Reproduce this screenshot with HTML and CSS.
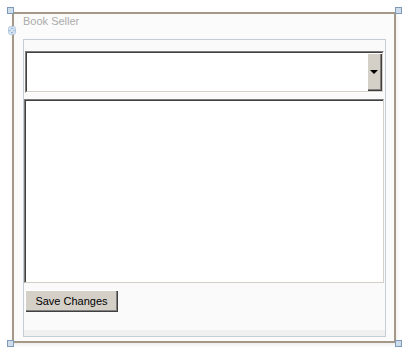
FILE: index.html
```html
<!DOCTYPE html>
<html>
<head>
<meta charset="utf-8">
<link rel="stylesheet" href="styles.css">
</head>
<body>
<div class="canvas">
  <div class="frame">
    <span class="handle h-tl"></span>
    <span class="handle h-tr"></span>
    <span class="handle h-bl"></span>
    <span class="handle h-br"></span>
    <svg class="move" width="8" height="9" viewBox="0 0 8 9">
      <rect x="0.5" y="0.5" width="7" height="8" rx="2" fill="#dbe6f3" stroke="#b5c8e0"/>
      <path d="M4 1.5 L2.5 3 H5.5 Z M4 7.5 L2.5 6 H5.5 Z M1 4.5 L2.5 3.2 V5.8 Z M7 4.5 L5.5 3.2 V5.8 Z" fill="#8fb0d8"/>
    </svg>
    <div class="title">Book Seller</div>
    <div class="panel">
      <div class="combo">
        <div class="combo-field"></div>
        <div class="combo-btn"><span class="arrow"></span></div>
      </div>
      <div class="listbox"></div>
      <div class="actions">
        <button class="btn">Save Changes</button>
      </div>
      <div class="footer"></div>
    </div>
  </div>
</div>
</body>
</html>
```
FILE: styles.css
```css
html, body {
  margin: 0;
  padding: 0;
  background: #ffffff;
  width: 408px;
  height: 354px;
  overflow: hidden;
  font-family: "Liberation Sans", Arial, sans-serif;
}

.canvas {
  padding: 12px 0 0 12px;
}

.frame {
  position: relative;
  box-sizing: border-box;
  width: 384px;
  height: 331px;
  border: 2px solid #a69886;
  background: #fbfbfb;
  box-shadow: 1px 2px 4px rgba(0, 0, 0, 0.08);
  padding: 0 8px 0 9px;
  display: flex;
  flex-direction: column;
}

.handle {
  position: absolute;
  width: 5px;
  height: 5px;
  border: 1px solid #7f99b8;
  background: #cfdcec;
}
.h-tl { left: -7px; top: -7px; }
.h-tr { right: -8px; top: -7px; }
.h-bl { left: -7px; bottom: -6px; }
.h-br { right: -8px; bottom: -6px; }

.move {
  position: absolute;
  left: -6px;
  top: 12px;
}

.title {
  height: 24px;
  padding-top: 1px;
  font-size: 11px;
  line-height: 12px;
  color: #ababab;
}

.panel {
  box-sizing: border-box;
  width: 363px;
  height: 298px;
  border: 1px solid #c3cdd8;
  background: #fafafa;
  display: flex;
  flex-direction: column;
}

.combo {
  box-sizing: border-box;
  margin: 11px 1px 0 1px;
  height: 42px;
  border-top: 1px solid #7b7b7b;
  border-left: 1px solid #7b7b7b;
  border-right: 1px solid #ffffff;
  border-bottom: 1px solid #ffffff;
  display: flex;
}
.combo-field {
  flex: 1;
  border-top: 1px solid #404040;
  border-left: 1px solid #404040;
  border-bottom: 1px solid #d4d0c8;
  background: #ffffff;
}
.combo-btn {
  box-sizing: border-box;
  width: 16px;
  border-top: 1px solid #404040;
  border-bottom: 1px solid #d4d0c8;
  border-right: 1px solid #d4d0c8;
  background: #d4d0c8;
  box-shadow: inset 1px 1px 0 #ffffff, inset -1px -1px 0 #404040, inset -2px -2px 0 #808080;
  display: flex;
  align-items: center;
  justify-content: center;
}
.arrow {
  width: 0;
  height: 0;
  border-left: 4px solid transparent;
  border-right: 4px solid transparent;
  border-top: 4px solid #000000;
  margin-left: -1px;
}

.listbox {
  box-sizing: border-box;
  margin: 6px 0 0 0;
  width: 360px;
  height: 184px;
  background: #ffffff;
  border-top: 1px solid #7b7b7b;
  border-left: 1px solid #7b7b7b;
  border-right: 1px solid #d4d0c8;
  border-bottom: 1px solid #d4d0c8;
  box-shadow: inset 1px 1px 0 #404040;
}

.actions {
  padding: 7px 0 0 1px;
  flex: 1;
}

.btn {
  box-sizing: border-box;
  width: 93px;
  height: 22px;
  padding: 0;
  margin: 0;
  font-family: "Liberation Sans", Arial, sans-serif;
  font-size: 11px;
  color: #000000;
  background: #d4d0c8;
  border: none;
  border-radius: 0;
  box-shadow: inset 1px 1px 0 #ffffff, inset -1px -1px 0 #404040, inset -2px -2px 0 #808080;
}

.footer {
  height: 6px;
  background: #f0f0f0;
}
```
